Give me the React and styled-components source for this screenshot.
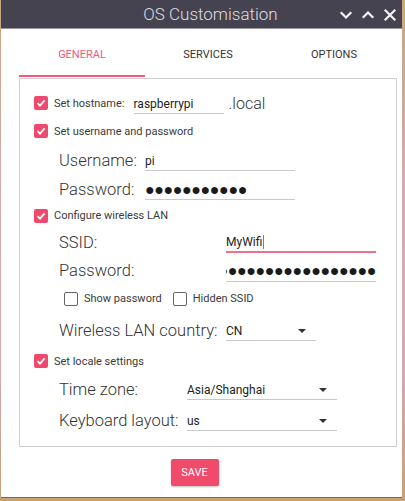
import React from 'react'
import styled, { createGlobalStyle } from 'styled-components'

const Global = createGlobalStyle`
  html, body { margin: 0; padding: 0; }
  body {
    width: 405px;
    height: 501px;
    overflow: hidden;
    font-family: Roboto, "Liberation Sans", sans-serif;
    background: linear-gradient(180deg, #c8a77f 0%, #d9a9b0 40%, #d7a7b0 75%, #c8a070 100%);
  }
`

const Window = styled.div`
  margin-left: 1px;
  width: 401px;
  height: 497px;
  background: #fff;
  display: flex;
  flex-direction: column;
  border-bottom: 1px solid #8a6a3a;
`

const TitleBar = styled.div`
  height: 29px;
  background: #45434f;
  display: flex;
  align-items: center;
  position: relative;
  border-bottom: 1px solid #9a98a4;
  box-sizing: border-box;
`

const Title = styled.div`
  flex: 1;
  text-align: center;
  padding-left: 18px;
  color: #dedde2;
  font-size: 17px;
  font-weight: 300;
`

const Controls = styled.div`
  position: absolute;
  right: 4px;
  top: 0;
  height: 29px;
  display: flex;
  align-items: center;
  gap: 6px;
`

const Body = styled.div`
  padding: 0 4px 0 18px;
  display: flex;
  flex-direction: column;
`

const Tabs = styled.div`
  display: flex;
  height: 48px;
  width: 378px;
`

const Tab = styled.div`
  flex: 1;
  display: flex;
  align-items: center;
  justify-content: center;
  font-size: 11px;
  color: ${p => (p.$active ? '#ec5a7d' : '#333')};
  border-bottom: 2px solid ${p => (p.$active ? '#f0587e' : 'transparent')};
  box-sizing: border-box;
  padding-top: 4px;
`

const Fieldset = styled.div`
  margin-top: 1px;
  width: 378px;
  border: 1px solid #cfcfcf;
  box-sizing: border-box;
  padding: 10px 0 10px 14px;
  display: flex;
  flex-direction: column;
`

const Row = styled.div`
  height: ${p => p.$h || 28}px;
  display: flex;
  align-items: center;
  padding-left: ${p => p.$indent || 0}px;
`

const Box = styled.span`
  width: 14px;
  height: 14px;
  border-radius: 2px;
  box-sizing: border-box;
  flex: none;
  display: inline-flex;
  align-items: center;
  justify-content: center;
  background: ${p => (p.$checked ? '#ef4a6e' : '#fff')};
  border: ${p => (p.$checked ? 'none' : '1.5px solid #666')};
`

const SmallLabel = styled.span`
  font-size: 11px;
  color: #3a3a3a;
  margin-left: 6px;
`

const Spacer = styled.span`
  width: ${p => p.$w}px;
  flex: none;
`

const BigLabel = styled.span`
  font-size: 16.5px;
  font-weight: 300;
  color: #333;
  width: ${p => p.$w}px;
  flex: none;
`

const Field = styled.div`
  width: ${p => p.$w}px;
  height: 20px;
  margin-top: 2px;
  box-sizing: border-box;
  border-bottom: ${p => (p.$focus ? '2px solid #ef6f8c' : '1px solid #c9c9c9')};
  display: flex;
  align-items: center;
  font-size: 12px;
  color: #222;
  overflow: hidden;
  white-space: nowrap;
  position: relative;
  justify-content: ${p => (p.$end ? 'flex-end' : 'flex-start')};
  flex: none;
`

const Dots = styled.span`
  font-size: 16px;
  letter-spacing: -0.4px;
  color: #1a1a1a;
  line-height: 1;
`

const Caret = styled.span`
  width: 1px;
  height: 14px;
  background: #ef4a6e;
  margin-left: 1px;
`

const Arrow = styled.span`
  position: absolute;
  right: 10px;
  top: 8px;
  width: 0;
  height: 0;
  border-left: 4px solid transparent;
  border-right: 4px solid transparent;
  border-top: 4px solid #333;
`

const Local = styled.span`
  font-size: 16px;
  font-weight: 300;
  color: #333;
  margin-left: 5px;
`

const Footer = styled.div`
  display: flex;
  justify-content: center;
  padding-top: 12px;
  padding-right: 28px;
`

const SaveButton = styled.button`
  width: 48px;
  height: 27px;
  border: none;
  border-radius: 2px;
  background: #f14b6c;
  color: #fff;
  font-family: Roboto, "Liberation Sans", sans-serif;
  font-size: 11px;
  box-shadow: 0 1px 2px rgba(0, 0, 0, 0.25);
  padding: 0;
`

function Check({ checked }) {
  return (
    <Box $checked={checked}>
      {checked && (
        <svg width="10" height="10" viewBox="0 0 10 10">
          <path d="M1.5 5.2 L4 7.6 L8.6 2.4" stroke="#fff" strokeWidth="1.8" fill="none" />
        </svg>
      )}
    </Box>
  )
}

function Icon({ d }) {
  return (
    <svg width="16" height="16" viewBox="0 0 16 16">
      <path d={d} stroke="#f2f2f4" strokeWidth="2.2" fill="none" strokeLinecap="square" />
    </svg>
  )
}

export default function App() {
  return (
    <>
      <Global />
      <Window>
        <TitleBar>
          <Title>OS Customisation</Title>
          <Controls>
            <Icon d="M3.5 6 L8 10.5 L12.5 6" />
            <Icon d="M3.5 10 L8 5.5 L12.5 10" />
            <Icon d="M3.5 3.5 L12.5 12.5 M12.5 3.5 L3.5 12.5" />
          </Controls>
        </TitleBar>
        <Body>
          <Tabs>
            <Tab $active>GENERAL</Tab>
            <Tab>SERVICES</Tab>
            <Tab>OPTIONS</Tab>
          </Tabs>
          <Fieldset>
            <Row>
              <Check checked />
              <SmallLabel>Set hostname:</SmallLabel>
              <Spacer $w={9} />
              <Field $w={90}>raspberrypi</Field>
              <Local>.local</Local>
            </Row>
            <Row>
              <Check checked />
              <SmallLabel>Set username and password</SmallLabel>
            </Row>
            <Row $h={30} $indent={25}>
              <BigLabel $w={86}>Username:</BigLabel>
              <Field $w={150}>pi</Field>
            </Row>
            <Row $indent={25}>
              <BigLabel $w={86}>Password:</BigLabel>
              <Field $w={150}><Dots>●●●●●●●●●●●</Dots></Field>
            </Row>
            <Row $h={25}>
              <Check checked />
              <SmallLabel>Configure wireless LAN</SmallLabel>
            </Row>
            <Row $indent={25}>
              <BigLabel $w={167}>SSID:</BigLabel>
              <Field $w={150} $focus>MyWifi<Caret /></Field>
            </Row>
            <Row $h={29} $indent={25}>
              <BigLabel $w={167}>Password:</BigLabel>
              <Field $w={150} $end><Dots>●●●●●●●●●●●●●●●●●</Dots></Field>
            </Row>
            <Row $h={27} $indent={30}>
              <Check />
              <SmallLabel>Show password</SmallLabel>
              <Spacer $w={11} />
              <Check />
              <SmallLabel>Hidden SSID</SmallLabel>
            </Row>
            <Row $h={36} $indent={25}>
              <BigLabel $w={167}>Wireless LAN country:</BigLabel>
              <Field $w={90}>CN<Arrow /></Field>
            </Row>
            <Row $h={26}>
              <Check checked />
              <SmallLabel>Set locale settings</SmallLabel>
            </Row>
            <Row $h={30} $indent={25}>
              <BigLabel $w={128}>Time zone:</BigLabel>
              <Field $w={150}>Asia/Shanghai<Arrow /></Field>
            </Row>
            <Row $h={32} $indent={25}>
              <BigLabel $w={128}>Keyboard layout:</BigLabel>
              <Field $w={150}>us<Arrow /></Field>
            </Row>
          </Fieldset>
          <Footer>
            <SaveButton>SAVE</SaveButton>
          </Footer>
        </Body>
      </Window>
    </>
  )
}
